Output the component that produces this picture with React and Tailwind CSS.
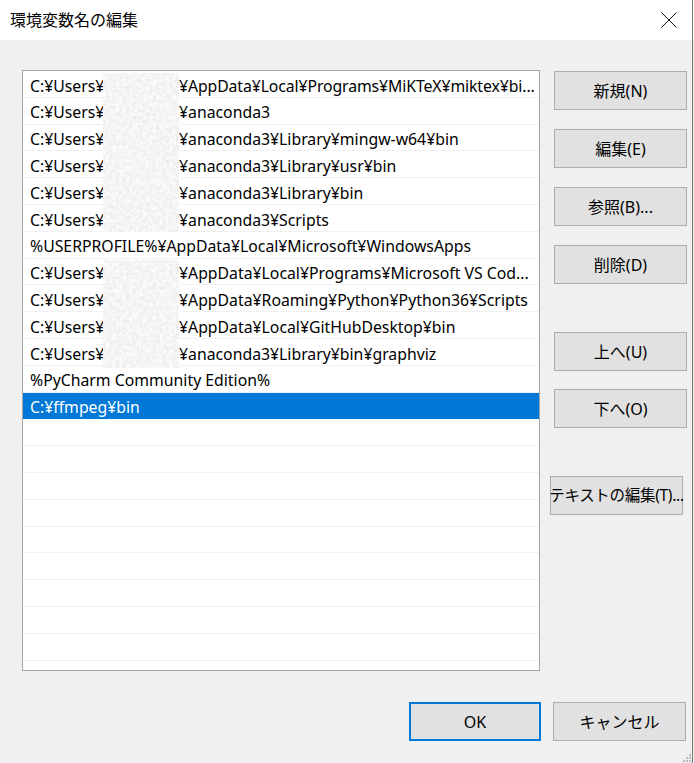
import React from "react";

const FONT = { fontFamily: '"Noto Sans", "Noto Sans CJK JP", sans-serif' };
const CJK = { fontFamily: '"Noto Sans", "Noto Sans CJK JP", sans-serif' };

const rows = [
  { u: true, t: "¥AppData¥Local¥Programs¥MiKTeX¥miktex¥bi..." },
  { u: true, t: "¥anaconda3" },
  { u: true, t: "¥anaconda3¥Library¥mingw-w64¥bin" },
  { u: true, t: "¥anaconda3¥Library¥usr¥bin" },
  { u: true, t: "¥anaconda3¥Library¥bin" },
  { u: true, t: "¥anaconda3¥Scripts" },
  { u: false, t: "%USERPROFILE%¥AppData¥Local¥Microsoft¥WindowsApps" },
  { u: true, t: "¥AppData¥Local¥Programs¥Microsoft VS Cod..." },
  { u: true, t: "¥AppData¥Roaming¥Python¥Python36¥Scripts" },
  { u: true, t: "¥AppData¥Local¥GitHubDesktop¥bin" },
  { u: true, t: "¥anaconda3¥Library¥bin¥graphviz" },
  { u: false, t: "%PyCharm Community Edition%" },
  { u: false, t: "C:¥ffmpeg¥bin", sel: true },
];

function Noise({ id }) {
  return (
    <svg width="100%" height="100%" className="block">
      <filter id={id}>
        <feTurbulence type="fractalNoise" baseFrequency="0.3" numOctaves="2" seed="3" />
        <feColorMatrix
          type="matrix"
          values="0.26 0 0 0 0.78  0.26 0 0 0 0.78  0.26 0 0 0 0.78  0 0 0 0 1"
        />
      </filter>
      <rect width="100%" height="100%" filter={`url(#${id})`} />
    </svg>
  );
}

function Btn({ children, className = "", textClass = "text-[16px]" }) {
  return (
    <div
      className={
        "h-[39px] w-[133px] flex items-center justify-center bg-[#e1e1e1] border border-[#adadad] text-black whitespace-nowrap " +
        textClass +
        " " +
        className
      }
      style={CJK}
    >
      <span className="pt-[1px]">{children}</span>
    </div>
  );
}

export default function App() {
  const empty = Array.from({ length: 10 });
  return (
    <div
      className="relative w-[694px] h-[763px] bg-[#f0f0f0] flex flex-col overflow-hidden"
      style={FONT}
    >
      {/* Title bar */}
      <div className="h-[40px] bg-white flex items-center justify-between pl-[10px] pr-[16px] shrink-0">
        <span className="text-[16px] text-black" style={CJK}>
          環境変数名の編集
        </span>
        <svg width="16" height="16" viewBox="0 0 16 16" className="mr-[1px]">
          <path d="M0.5 0.5 L15.5 15.5 M15.5 0.5 L0.5 15.5" stroke="#111" strokeWidth="1" fill="none" />
        </svg>
      </div>

      {/* Body */}
      <div className="flex pl-[22px] pt-[30px] gap-[14px]">
        {/* List */}
        <div className="relative w-[518px] h-[601px] border border-[#a5a5a5] bg-white overflow-hidden">
          {rows.map((r, i) => (
            <div
              key={i}
              className={
                "h-[26.8px] flex items-center pl-[7px] whitespace-nowrap overflow-hidden border-b text-[15.8px] " +
                (r.sel
                  ? "bg-[#0078d7] text-white border-[#0078d7]"
                  : "text-black border-[#f0f0f0]")
              }
            >
              <span className="pt-[5px] flex">
                {r.u ? (
                  <>
                    <span className="inline-block w-[149px]">C:¥Users¥</span>
                    <span className={i === 0 ? "tracking-[-0.1px]" : ""}>{r.t}</span>
                  </>
                ) : (
                  <span>{r.t}</span>
                )}
              </span>
            </div>
          ))}
          {empty.map((_, i) => (
            <div key={"e" + i} className="h-[26.8px] border-b border-[#f0f0f0]" />
          ))}
          {/* blurred user names */}
          <div className="absolute left-[80px] top-[2px] w-[76px] h-[159px]">
            <Noise id="n1" />
          </div>
          <div className="absolute left-[80px] top-[189px] w-[76px] h-[108px]">
            <Noise id="n2" />
          </div>
        </div>

        {/* Buttons */}
        <div className="flex flex-col pt-[1px]">
          <Btn>新規(N)</Btn>
          <Btn className="mt-[19px]">編集(E)</Btn>
          <Btn className="mt-[19px]">参照(B)...</Btn>
          <Btn className="mt-[19px]">削除(D)</Btn>
          <Btn className="mt-[48px]">上へ(U)</Btn>
          <Btn className="mt-[18px]">下へ(O)</Btn>
          <Btn className="mt-[48px] -ml-[4px] tracking-[-0.3px]" textClass="text-[15.5px]">
            テキストの編集(T)...
          </Btn>
        </div>
      </div>

      {/* Bottom buttons */}
      <div className="flex pl-[409px] pt-[31px] gap-[12px]">
        <div
          className="h-[39px] w-[132px] flex items-center justify-center bg-[#e1e1e1] border-2 border-[#0078d7] text-[16px] text-black"
          style={CJK}
        >
          <span className="pt-[1px]">OK</span>
        </div>
        <Btn>キャンセル</Btn>
      </div>

      {/* right window edge */}
      <div className="absolute right-[1px] top-0 w-[1px] h-full bg-[#7a7a7a]" />

      {/* resize grip */}
      <svg className="absolute right-[3px] bottom-[1px]" width="10" height="10" viewBox="0 0 10 10">
        <rect x="8" y="2" width="2" height="2" fill="#bdbdbd" />
        <rect x="5" y="5" width="2" height="2" fill="#bdbdbd" />
        <rect x="8" y="5" width="2" height="2" fill="#bdbdbd" />
        <rect x="2" y="8" width="2" height="2" fill="#bdbdbd" />
        <rect x="5" y="8" width="2" height="2" fill="#bdbdbd" />
        <rect x="8" y="8" width="2" height="2" fill="#bdbdbd" />
      </svg>
    </div>
  );
}
